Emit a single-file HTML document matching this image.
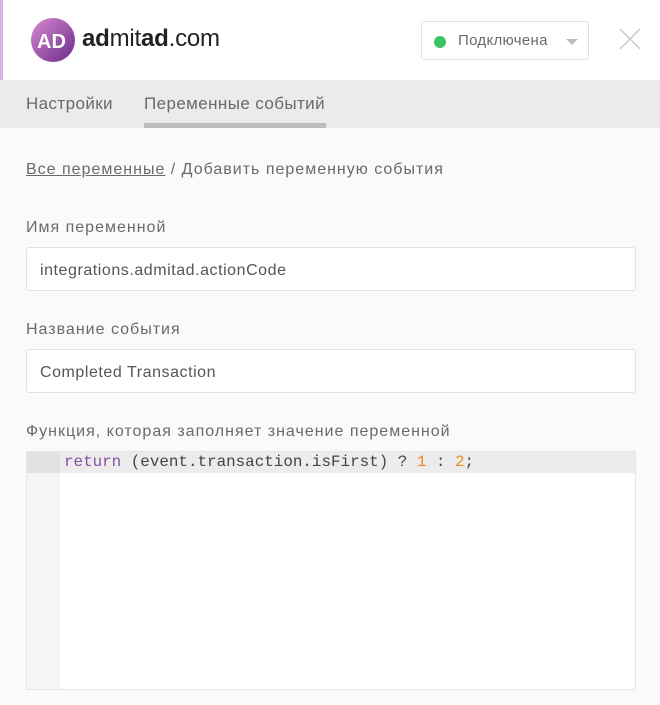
<!DOCTYPE html>
<html><head><meta charset="utf-8"><style>
*{margin:0;padding:0;box-sizing:border-box}
body{width:660px;height:705px;background:#fafafa;font-family:"Liberation Sans",sans-serif;position:relative;overflow:hidden;color:#555}
.hdr{position:absolute;left:0;top:0;width:660px;height:80px;background:#fff;border-left:3px solid #d9b3e3}
.tabs{position:absolute;left:0;top:80px;width:660px;height:48px;background:#ebebeb}
.tab{position:absolute;top:14px;font-size:17px;color:#6a6a6a;letter-spacing:0.4px}
.abs{position:absolute}
.lbl{position:absolute;left:26px;font-size:16px;color:#6a6a6a;letter-spacing:1px}
.inp{position:absolute;left:26px;width:610px;height:44px;background:#fff;border:1px solid #e2e2e2;border-radius:3px;font-size:16px;color:#555;padding:14px 0 0 13px;letter-spacing:0.55px}
</style></head><body>
<div class="hdr">
<svg class="abs" style="left:27px;top:17px" width="46" height="46" viewBox="0 0 46 46"><defs><linearGradient id="g" x1="0" y1="0" x2="1" y2="1"><stop offset="0" stop-color="#d98ad0"/><stop offset="1" stop-color="#6a2a8a"/></linearGradient></defs><circle cx="23" cy="23" r="22" fill="url(#g)"/><text x="7" y="31" font-family="Liberation Sans" font-weight="bold" font-size="20" fill="#fff">AD</text></svg>
<div class="abs" style="left:79px;top:25px;font-size:24px;color:#222;letter-spacing:-0.2px"><b>ad</b>mit<b>ad</b>.com</div>
<div class="abs" style="left:418px;top:21px;width:168px;height:39px;border:1px solid #e2e2e2;border-radius:3px;background:#fff">
<div class="abs" style="left:12px;top:14px;width:12px;height:12px;border-radius:50%;background:#3cc562"></div>
<div class="abs" style="left:36px;top:10px;font-size:15px;color:#6a6a6a;letter-spacing:0.3px">Подключена</div>
<div class="abs" style="left:144px;top:17px;width:0;height:0;border-left:6px solid transparent;border-right:6px solid transparent;border-top:6px solid #bbb"></div>
</div>
<svg class="abs" style="left:615px;top:27px" width="24" height="24"><path d="M2 2L22 22M22 2L2 22" stroke="#c8c8c8" stroke-width="1.5"/></svg>
</div>
<div class="tabs">
<div class="tab" style="left:26px">Настройки</div>
<div class="tab" style="left:144px">Переменные событий</div>
<div class="abs" style="left:144px;top:43px;width:182px;height:5px;background:#bdbdbd"></div>
</div>
<div class="abs" style="left:26px;top:161px;font-size:16px;color:#6a6a6a;letter-spacing:1px"><span style="text-decoration:underline">Все переменные</span> / Добавить переменную события</div>
<div class="lbl" style="top:219px">Имя переменной</div>
<div class="inp" style="top:247px">integrations.admitad.actionCode</div>
<div class="lbl" style="top:321px">Название события</div>
<div class="inp" style="top:349px">Completed Transaction</div>
<div class="lbl" style="top:423px">Функция, которая заполняет значение переменной</div>
<div class="abs" style="left:26px;top:451px;width:610px;height:239px;background:#fff;border:1px solid #e6e6e6">
<div class="abs" style="left:0;top:0;width:33px;height:237px;background:#f5f5f5"></div>
<div class="abs" style="left:0;top:0;width:608px;height:21px;background:#ececec"></div>
<div class="abs" style="left:0;top:0;width:33px;height:21px;background:#e2e2e2"></div>
<div class="abs" style="left:37px;top:1px;font-family:'Liberation Mono',monospace;font-size:15.9px;color:#444;white-space:pre"><span style="color:#8a4fa5">return</span> (event.transaction.isFirst) ? <span style="color:#f08a1c">1</span> : <span style="color:#f08a1c">2</span>;</div>
</div>
</body></html>
